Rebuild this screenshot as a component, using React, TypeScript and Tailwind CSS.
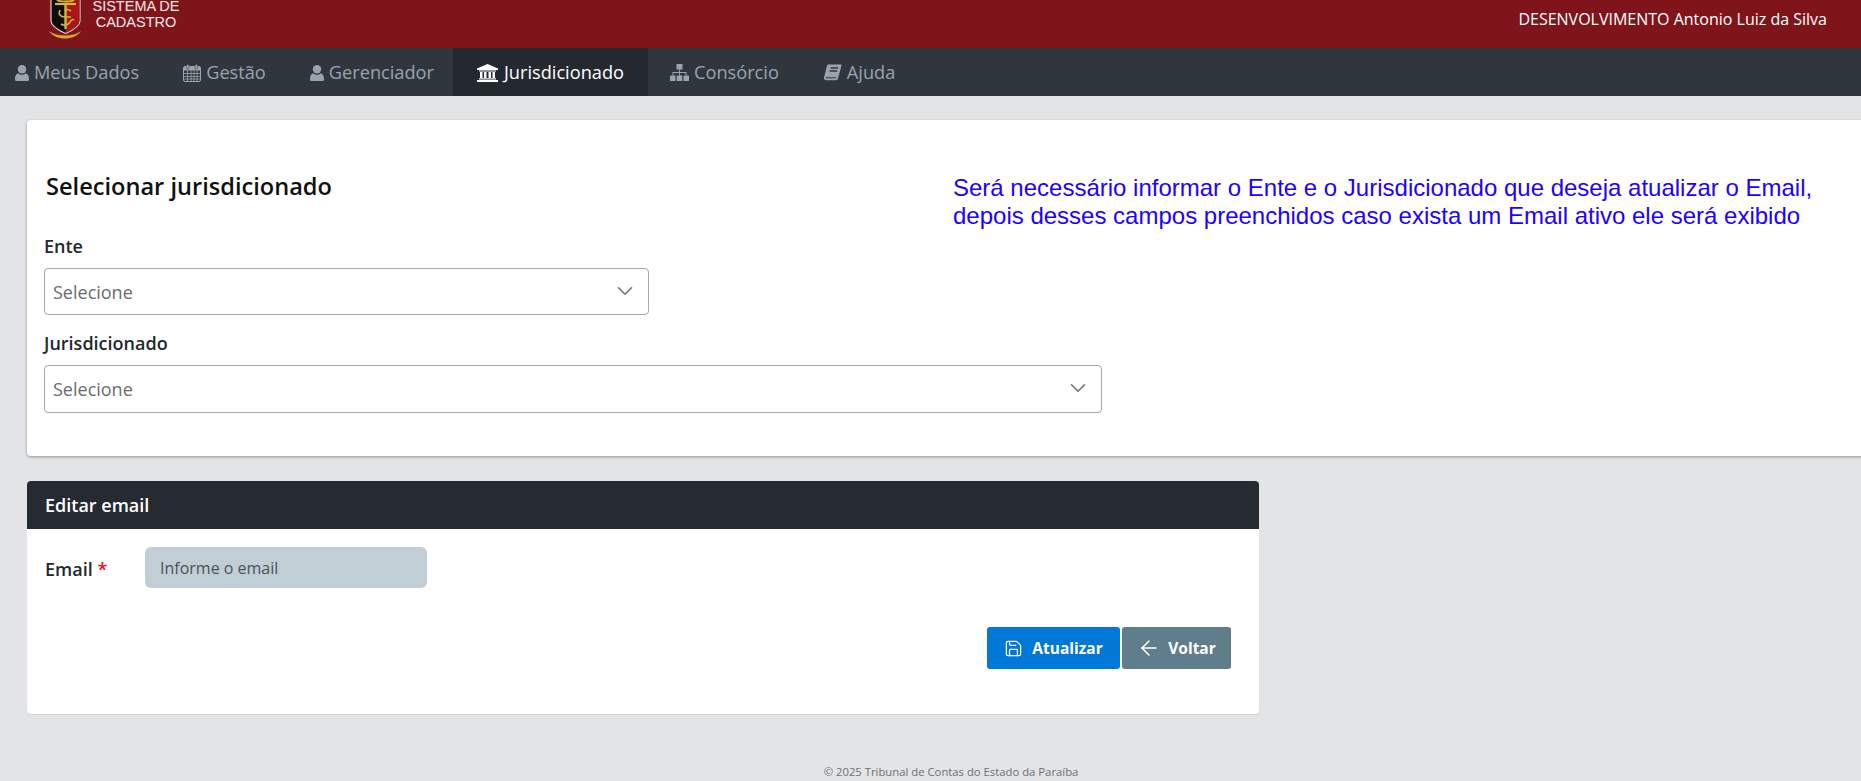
import { ArrowLeft, ChevronDown, Save } from 'lucide-react';

const ui = { fontFamily: '"Open Sans", "Noto Sans", sans-serif' };
const arial = { fontFamily: '"Liberation Sans", Arial, sans-serif' };

function UserIcon() {
  return (
    <svg viewBox="0 0 14 16" className="w-[14px] h-4" fill="currentColor">
      <circle cx="7" cy="4.200" r="4.200" />
      <path d="M1.500 16C.5 16 0 15.300 0 14.200 0 11 1 8.500 3.500 8.500c1 .8 2.200 1.300 3.500 1.300s2.500-.5 3.500-1.300c2.500 0 3.500 2.500 3.500 5.700 0 1.100-.5 1.800-1.500 1.800z" />
    </svg>
  );
}

function CalendarIcon() {
  return (
    <svg viewBox="0 0 18 18" className="w-[18px] h-[18px]">
      <rect x="0.500" y="2.500" width="17" height="15" rx="1.500" fill="none" stroke="currentColor" />
      <rect x="1" y="3" width="16" height="3.500" fill="currentColor" />
      <rect x="3.500" y="0.500" width="2.500" height="4.500" rx="1" fill="currentColor" stroke="#2f363d" strokeWidth="0.500" />
      <rect x="12" y="0.500" width="2.500" height="4.500" rx="1" fill="currentColor" stroke="#2f363d" strokeWidth="0.500" />
      <path d="M1 9.500h16M1 12.500h16M1 15h16M4.500 6.500V17M8 6.500V17M11 6.500V17M14 6.500V17" stroke="currentColor" strokeWidth="0.800" />
    </svg>
  );
}

function BankIcon() {
  return (
    <svg viewBox="0 0 21 18" className="w-[21px] h-[18px]" fill="currentColor">
      <path d="M10.500 0 21 4.500V6H0V4.500z" />
      <rect x="2" y="6.500" width="17" height="1" />
      <path d="M3 8h2.500v6H3zM7 8h2.500v6H7zM11.500 8H14v6h-2.500zM15.500 8H18v6h-2.500z" />
      <rect x="2" y="14.300" width="17" height="1.200" />
      <rect x="0" y="16" width="21" height="2" />
    </svg>
  );
}

function SitemapIcon() {
  return (
    <svg viewBox="0 0 19 17" className="w-[19px] h-[17px]" fill="currentColor">
      <rect x="6.500" y="0" width="6" height="5.500" rx="0.600" />
      <path d="M9 5.500h1V8h6.500v3.500h-1V9H10v2.500H9V9H3.500v2.500h-1V8H9z" />
      <rect x="0" y="11.500" width="5.500" height="5.500" rx="0.600" />
      <rect x="6.750" y="11.500" width="5.500" height="5.500" rx="0.600" />
      <rect x="13.500" y="11.500" width="5.500" height="5.500" rx="0.600" />
    </svg>
  );
}

function BookIcon() {
  return (
    <svg viewBox="0 0 19 18" className="w-[19px] h-[18px]" fill="currentColor">
      <path d="M5.200 .5h12.300c.7 0 1.100.6.900 1.200l-3.300 12.600c-.3 1.200-1.100 1.900-2.400 1.900H3.400C1.700 16.200.7 15 1 13.500c.1-.5.2-1 .4-1.500L4 1.700C4.200 .9 4.600 .5 5.200 .5z" />
      <path d="M7.500 4h7.500M6.700 7h7.500" stroke="#2f363d" strokeWidth="1.300" fill="none" />
      <path d="M2.800 13.800h10.400" stroke="#2f363d" strokeWidth="1" fill="none" />
    </svg>
  );
}

function Logo() {
  return (
    <svg viewBox="0 0 34 40" className="w-[34px] h-10 shrink-0">
      <path d="M3 -4h29v25c0 5-7 9-14.500 12.500C10 30 3 26 3 21z" fill="#0d0d0d" stroke="#d5d5d5" strokeWidth="1.200" />
      <path d="M17.500 -4H31.400v25c0 4.500-6.400 8.500-13.900 11.800z" fill="#a9151b" />
      <path d="M7 4h21" stroke="#d9b43c" strokeWidth="2.200" />
      <path d="M9 0c3 2 14 2 17 0" stroke="#d9b43c" strokeWidth="1.800" fill="none" />
      <path d="M17.500 3v26" stroke="#d9b43c" strokeWidth="2.400" />
      <path d="M12 10c-2 4 0 7 5 7h6M23 11c-3-2-5-2-6 0M13 24c3 2 7 1 9-2 1-2 3-3 4-2" stroke="#d9b43c" strokeWidth="1.600" fill="none" />
      <path d="M1 31c4 3 10 4.500 16 4.500S29 34 33 31c-3 5-10 7.500-16 7.500S4 36 1 31z" fill="#d8a92c" />
    </svg>
  );
}

const menu = [
  { name: 'Meus Dados', icon: <UserIcon /> },
  { name: 'Gestão', icon: <CalendarIcon /> },
  { name: 'Gerenciador', icon: <UserIcon /> },
  { name: 'Jurisdicionado', icon: <BankIcon />, active: true },
  { name: 'Consórcio', icon: <SitemapIcon /> },
  { name: 'Ajuda', icon: <BookIcon /> },
];

function SelectBox({ width }: { width: string }) {
  return (
    <div className={`${width} flex items-center justify-between pl-2 pr-[10px] bg-white border border-[#a8a8a8] rounded-[4px] text-[#6c6c6c] text-[18px]`}>
      <span className="pt-px">Selecione</span>
      <ChevronDown size={26} strokeWidth={1.5} className="text-[#757575] mb-[2px]" />
    </div>
  );
}

export default function App() {
  return (
    <div className="h-[781px] overflow-hidden bg-[#e3e4e6] flex flex-col" style={ui}>
      <header className="h-12 shrink-0 bg-[#7f151a] flex items-start justify-between overflow-hidden">
        <div className="flex items-start ml-[48px] text-white">
          <Logo />
          <div className="ml-[-1px] mt-[-2px] w-[110px] text-center text-[14.5px] leading-4 opacity-90" style={arial}>
            SISTEMA DE<br />CADASTRO
          </div>
        </div>
        <div className="pt-2 pr-[34px] text-white text-[16px] leading-[22px]">DESENVOLVIMENTO Antonio Luiz da Silva</div>
      </header>

      <nav className="h-12 shrink-0 bg-[#2f363d] flex text-[18.2px] text-[#9ba4ad]">
        {menu.map((item, i) => (
          <div
            key={item.name}
            className={
              item.active
                ? 'flex items-center gap-[6px] ml-[-3px] pt-px px-[24px] bg-[#24292f] text-white'
                : i === 0
                  ? 'flex items-center gap-[5px] pt-px pl-[15px] pr-[22px]'
                  : 'flex items-center gap-[5px] pt-px px-[22px]'
            }
          >
            {item.icon}
            <span>{item.name}</span>
          </div>
        ))}
      </nav>

      <main className="flex-1 pl-[27px] pt-6 flex flex-col min-h-0">
        <section className="h-[336px] shrink-0 mr-[-10px] bg-white rounded-[4px] shadow-[0_1px_3px_rgba(0,0,0,0.35)] pl-[17px] pt-[47px]">
          <div className="flex items-start">
            <h2 className="w-[909px] shrink-0 pl-[2px] text-[23.6px] leading-[38px] font-semibold text-[#111]">Selecionar jurisdicionado</h2>
            <p className="mt-[7px] whitespace-nowrap text-[24px] leading-[28px] text-[#2200ff]" style={arial}>
              Será necessário informar o Ente e o Jurisdicionado que deseja atualizar o Email,<br />
              depois desses campos preenchidos caso exista um Email ativo ele será exibido
            </p>
          </div>
          <label className="block mt-1 text-[18px] leading-6 font-semibold text-[#23282e]">Ente</label>
          <div className="mt-[10px]"><SelectBox width="w-[605px] h-[47px]" /></div>
          <label className="block mt-4 text-[18px] leading-6 font-semibold text-[#23282e]">Jurisdicionado</label>
          <div className="mt-[10px]"><SelectBox width="w-[1058px] h-[48px]" /></div>
        </section>

        <section className="w-[1232px] h-[234px] mt-[25px] bg-white rounded-[4px] shadow-[0_1px_1px_rgba(0,0,0,0.08)] overflow-hidden">
          <div className="h-12 bg-[#262a31] flex items-center pl-[18px] text-white text-[18px] font-semibold">Editar email</div>
          <div className="pl-[18px] pr-7">
            <div className="flex items-center mt-[18px]">
              <label className="w-[100px] mt-1 text-[18px] font-semibold text-[#23282e]">Email <span className="text-[#e0102a]">*</span></label>
              <div className="w-[282px] h-[41px] bg-[#c1ced6] rounded-[6px] pl-[15px] flex items-center text-[16px] text-[#4a5158]">Informe o email</div>
            </div>
            <div className="flex justify-end gap-[2px] mt-[39px] text-white text-[15.5px] font-bold">
              <button className="w-[133px] h-[42px] bg-[#0078d7] rounded-[3px] flex items-center justify-center gap-[9px]"><Save size={19} strokeWidth={1.6} /><span className="pt-px">Atualizar</span></button>
              <button className="w-[109px] h-[42px] bg-[#607d8b] rounded-[3px] flex items-center justify-center gap-[7px]"><ArrowLeft size={24} strokeWidth={1.5} /><span className="pt-px">Voltar</span></button>
            </div>
          </div>
        </section>

        <footer className="mt-[50px] pl-[14px] text-center text-[11.3px] text-[#6c6f73]">© 2025 Tribunal de Contas do Estado da Paraíba</footer>
      </main>
    </div>
  );
}
